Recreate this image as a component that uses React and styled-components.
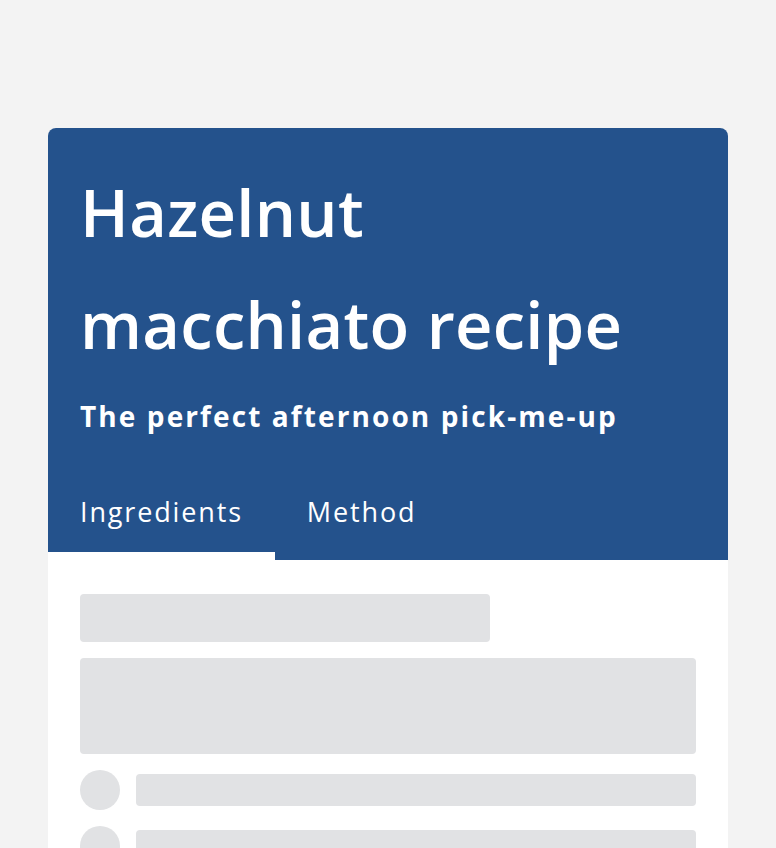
import React, { useState } from 'react';
import styled, { createGlobalStyle } from 'styled-components';

const GlobalStyle = createGlobalStyle`
  * { box-sizing: border-box; }
  body {
    margin: 0;
    background: #f3f3f3;
    font-family: "Open Sans", "Noto Sans", sans-serif;
  }
`;

const Page = styled.div`
  padding: 128px 48px 0;
  height: 848px;
  overflow: hidden;
`;

const Card = styled.div`
  background: #fff;
  border-radius: 8px;
  overflow: hidden;
`;

const Header = styled.header`
  background: #24528c;
  color: #fff;
  padding: 28px 32px 0;
`;

const Title = styled.h1`
  margin: 0;
  max-width: 580px;
  font-size: 65px;
  font-weight: 600;
  line-height: 112px;
  letter-spacing: 0.3px;
`;

const Subtitle = styled.p`
  margin: 15px 0 0;
  font-size: 28px;
  font-weight: 700;
  line-height: 42px;
  letter-spacing: 2.1px;
`;

const Tabs = styled.div`
  display: flex;
  margin: 42px -32px 0;
`;

const Tab = styled.button`
  border: 0;
  background: transparent;
  color: #fff;
  font-family: inherit;
  font-size: 27px;
  letter-spacing: 1.85px;
  padding: 14px 32px 22px;
  border-bottom: 8px solid ${p => (p.active ? '#fff' : 'transparent')};
  cursor: pointer;
`;

const Body = styled.div`
  padding: 34px 32px 32px;
  display: flex;
  flex-direction: column;
  gap: 16px;
`;

const Bar = styled.div`
  background: #e1e2e4;
  border-radius: 4px;
  height: ${p => p.h}px;
  width: ${p => p.w || '100%'};
  flex: ${p => (p.grow ? 1 : 'none')};
`;

const Row = styled.div`
  display: flex;
  align-items: center;
  gap: 16px;
`;

const Dot = styled.div`
  width: 40px;
  height: 40px;
  border-radius: 50%;
  background: #e1e2e4;
  flex: none;
`;

export default function App() {
  const [tab, setTab] = useState('ingredients');
  return (
    <Page>
      <GlobalStyle />
      <Card>
        <Header>
          <Title>Hazelnut macchiato recipe</Title>
          <Subtitle>The perfect afternoon pick-me-up</Subtitle>
          <Tabs>
            <Tab active={tab === 'ingredients'} onClick={() => setTab('ingredients')}>Ingredients</Tab>
            <Tab active={tab === 'method'} onClick={() => setTab('method')}>Method</Tab>
          </Tabs>
        </Header>
        <Body>
          <Bar h={48} w="410px" />
          <Bar h={96} />
          {[0, 1, 2, 3].map(i => (
            <Row key={i}>
              <Dot />
              <Bar h={32} grow />
            </Row>
          ))}
        </Body>
      </Card>
    </Page>
  );
}
